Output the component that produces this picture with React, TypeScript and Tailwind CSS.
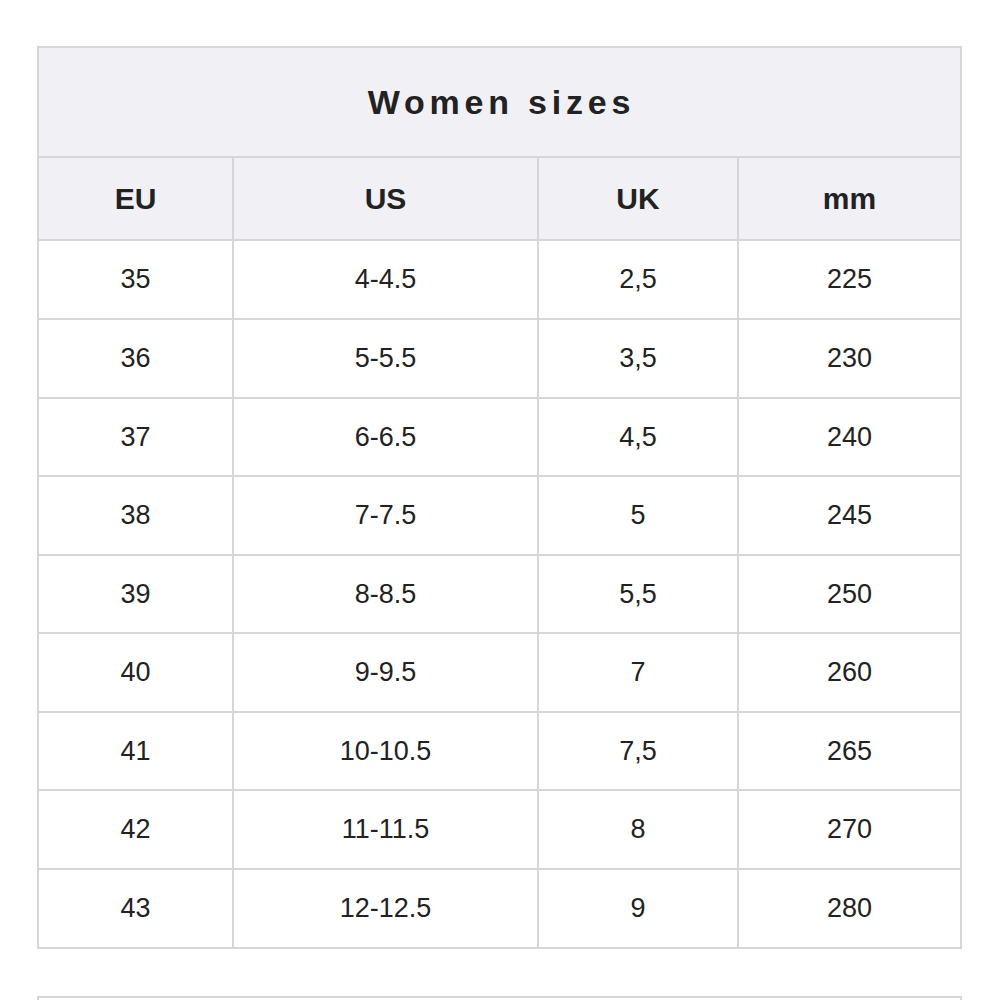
import React from "react";

const rows: [string, string, string, string][] = [
  ["35", "4-4.5", "2,5", "225"],
  ["36", "5-5.5", "3,5", "230"],
  ["37", "6-6.5", "4,5", "240"],
  ["38", "7-7.5", "5", "245"],
  ["39", "8-8.5", "5,5", "250"],
  ["40", "9-9.5", "7", "260"],
  ["41", "10-10.5", "7,5", "265"],
  ["42", "11-11.5", "8", "270"],
  ["43", "12-12.5", "9", "280"],
];

const heights = ["h-[77px]", "h-[77px]", "h-[76px]", "h-[77px]", "h-[76px]", "h-[77px]", "h-[76px]", "h-[77px]", "h-[77px]"];

export default function App() {
  return (
    <div className="w-[1000px] h-[1000px] overflow-hidden bg-white font-['Liberation_Sans',Arial,sans-serif] text-[#222222]">
      <div className="pt-[46px] pl-[37px]">
        <div className="w-[925px] bg-[#d6d6d9] p-[2px] flex flex-col gap-[2px]">
          <div className="h-[108px] bg-[#f1f1f5] flex items-center justify-center">
            <span className="text-[34px] font-bold tracking-[4.8px] pl-[4px]">Women sizes</span>
          </div>
          <div className="grid grid-cols-[193px_303px_198px_221px] gap-[2px]">
            {["EU", "US", "UK", "mm"].map((h) => (
              <div key={h} className="h-[81px] bg-[#f1f1f5] flex items-center justify-center text-[30px] font-bold">
                {h}
              </div>
            ))}
          </div>
          {rows.map((r, i) => (
            <div key={i} className="grid grid-cols-[193px_303px_198px_221px] gap-[2px]">
              {r.map((c, j) => (
                <div key={j} className={`${heights[i]} bg-white flex items-center justify-center text-[27px]`}>
                  {c}
                </div>
              ))}
            </div>
          ))}
        </div>
        <div className="mt-[47px] w-[925px] h-[40px] border-t-2 border-l-2 border-r-2 border-[#d6d6d9] bg-white"></div>
      </div>
    </div>
  );
}
